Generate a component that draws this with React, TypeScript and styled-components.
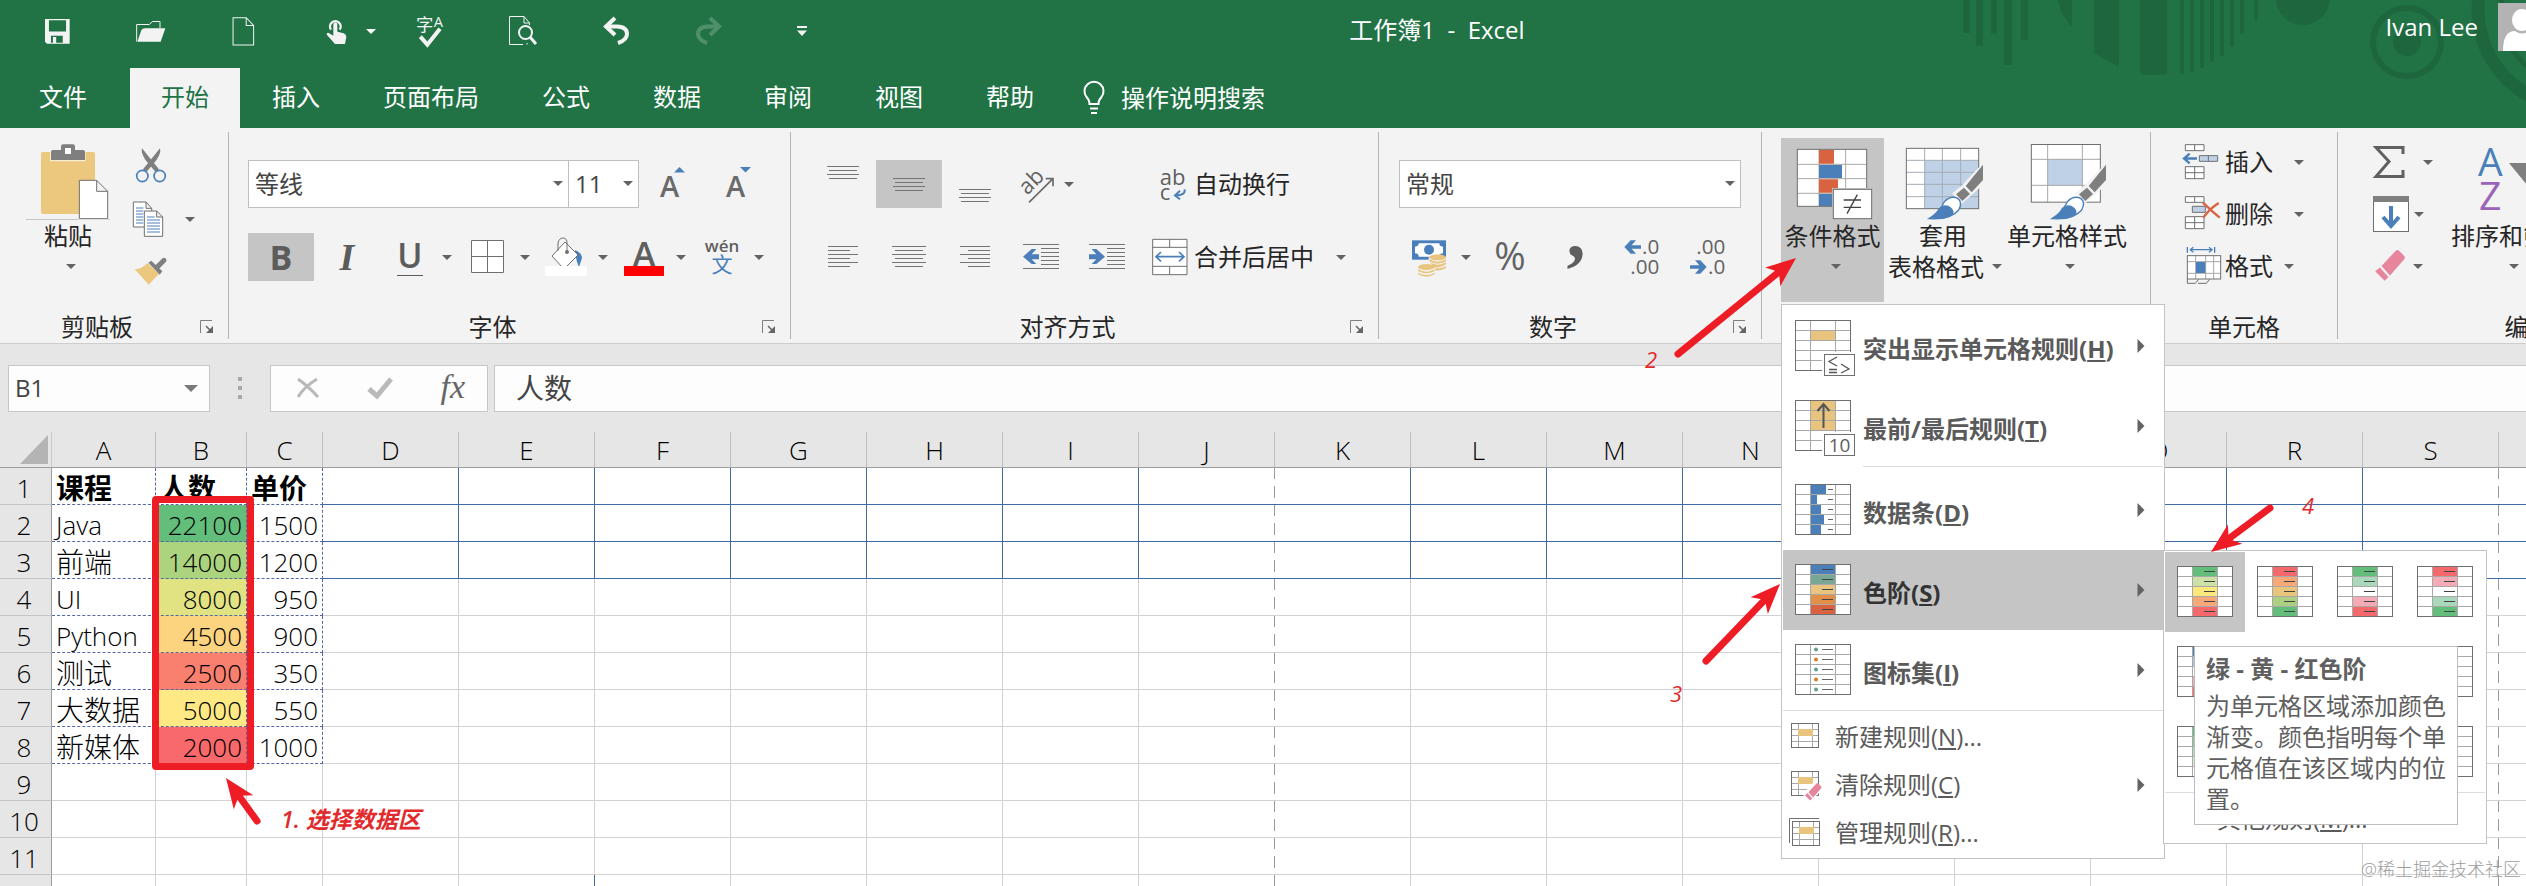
import React from "react";
import styled, { createGlobalStyle, css } from "styled-components";

const BLUE = "#4a7fb9";
const GREY = "#7f7f7f";
const LINE = "#6f6f6f";
const ORANGE = "#d96240";
const SAND = "#e9c47f";
const RED = "#ee1c25";

const GlobalStyle = createGlobalStyle`
  * { box-sizing: border-box; }
  body { margin: 0; }
  body, button, input, select, table {
    font-family: "Open Sans", "Noto Sans CJK SC", sans-serif;
    font-size: 24px;
    line-height: 30px;
  }
  button {
    border: 0;
    margin: 0;
    padding: 0;
    background: transparent;
    color: inherit;
    cursor: pointer;
  }
  svg { display: block; flex: none; overflow: visible; }
  svg text { font-family: "Open Sans", "Noto Sans CJK SC", sans-serif; }
`;

const App = styled.div`
  position: relative;
  display: flex;
  flex-direction: column;
  height: 100vh;
  overflow: hidden;
  background: #fff;
  color: #262626;
`;

/* ---------- header ---------- */

const Header = styled.header`
  position: relative;
  flex: none;
  overflow: hidden;
  background: #217346;
  color: #fff;
`;

const HeaderArt = styled.svg`
  position: absolute;
  top: 0;
  right: 0;
`;

const TitleBar = styled.div`
  position: relative;
  display: flex;
  height: 68px;
`;

const QuickAccess = styled.div`
  display: flex;
  flex: none;
  padding: 0 0 6px 11px;
`;

const QuickButton = styled.button<{ $split?: boolean; $dim?: boolean }>`
  display: flex;
  align-items: center;
  justify-content: ${(p) => (p.$split ? "flex-start" : "center")};
  gap: 17px;
  width: 93px;
  padding-left: ${(p) => (p.$split ? "35px" : "0")};
  opacity: ${(p) => (p.$dim ? 0.22 : 1)};
`;

const WindowTitle = styled.div`
  flex: 1;
  padding-top: 15px;
  text-align: center;
  white-space: pre;
`;

const Account = styled.div`
  display: flex;
  flex: none;
  justify-content: flex-end;
  width: 500px;
  padding-top: 3px;
`;

const AccountName = styled.button`
  height: 48px;
  margin-right: 20px;
`;

const Avatar = styled.svg`
  margin-right: -20px;
`;

const Tabs = styled.nav`
  position: relative;
  display: flex;
  gap: 1px;
  height: 60px;
`;

const Tab = styled.button<{ $active?: boolean; $file?: boolean }>`
  padding: ${(p) => (p.$file ? "0 42px 2px 39px" : "0 31px 2px")};
  background: ${(p) => (p.$active ? "#f3f3f3" : "transparent")};
  color: ${(p) => (p.$active ? "#217346" : "#fff")};
`;

const TellMe = styled.button`
  display: flex;
  align-items: center;
  gap: 15px;
  margin-left: 16px;
`;

/* ---------- ribbon ---------- */

const Ribbon = styled.div`
  display: flex;
  flex: none;
  padding: 4px 0;
  border-bottom: 1px solid #cdcdcd;
  background: #f3f3f3;
`;

const Group = styled.section<{ $width: number }>`
  display: flex;
  flex: none;
  flex-direction: column;
  width: ${(p) => p.$width}px;
  height: 207px;
  border-right: 1px solid #b4b4b4;
`;

const GroupBody = styled.div<{ $pad: number }>`
  display: flex;
  flex: 1;
  align-items: flex-start;
  padding-left: ${(p) => p.$pad}px;
`;

const GroupFooter = styled.div`
  display: flex;
  align-items: center;
  height: 24px;
`;

const GroupLabel = styled.div`
  flex: 1;
  line-height: 24px;
  text-align: center;
`;

const Launcher = styled.button`
  width: 34px;
  padding-left: 6px;
`;

const Rows = styled.div`
  display: flex;
  flex-direction: column;
  gap: 25px;
  padding-top: 28px;
`;

const Row = styled.div`
  display: flex;
  height: 48px;
`;

const Stack = styled.div<{ $left: number; $top?: number; $step?: number }>`
  display: grid;
  grid-auto-rows: ${(p) => p.$step ?? 52}px;
  margin: ${(p) => p.$top ?? 4}px 0 0 ${(p) => p.$left}px;
`;

const StackButton = styled.button<{ $gap?: number }>`
  display: flex;
  align-items: center;
  gap: ${(p) => p.$gap ?? 17}px;
`;

const StackLabel = styled.span<{ $after: number }>`
  margin: 0 ${(p) => p.$after}px 0 3px;
`;

const BigButton = styled.button<{ $width: number; $active?: boolean; $left?: number }>`
  display: flex;
  flex: none;
  flex-direction: column;
  align-items: center;
  width: ${(p) => p.$width}px;
  height: 164px;
  margin: 6px 0 0 ${(p) => p.$left ?? 0}px;
  padding-top: 6px;
  line-height: 31px;
  white-space: nowrap;
  background: ${(p) => (p.$active ? "#c5c5c5" : "transparent")};
`;

const BigCaret = styled.span`
  display: flex;
  align-items: center;
  height: 31px;
  padding-left: 6px;
`;

const CaretLine = styled.span`
  display: flex;
  align-items: center;
  gap: 8px;
  padding-left: 4px;
`;

const ToolButton = styled.button<{ $active?: boolean }>`
  display: flex;
  align-items: center;
  justify-content: center;
  width: 66px;
  height: 48px;
  background: ${(p) => (p.$active ? "#c5c5c5" : "transparent")};
  color: #5c5c5c;
`;

const SplitButton = styled.button`
  display: flex;
  align-items: center;
  width: 78px;
  height: 48px;
  color: #5c5c5c;
`;

const SplitIcon = styled.span<{ $width?: number }>`
  display: flex;
  justify-content: center;
  width: ${(p) => p.$width ?? 60}px;
  margin-right: 2px;
`;

const letter = css`
  font-size: 34px;
  line-height: 40px;
`;

const Bold = styled.b`
  ${letter}
`;

const Italic = styled.i`
  font-family: "Liberation Serif", serif;
  font-size: 38px;
  font-weight: 700;
  line-height: 40px;
`;

const Underline = styled.span`
  ${letter}
  height: 37px;
  border-bottom: 1px solid #5c5c5c;
  font-weight: 600;
  line-height: 32px;
`;

const LabelButton = styled.button<{ $left: number }>`
  display: flex;
  align-items: center;
  height: 48px;
  margin-left: ${(p) => p.$left}px;
`;

const ButtonText = styled.span`
  margin: 0 22px 0 6px;
`;

const SelectBox = styled.span<{ $width: number; $joined?: boolean }>`
  position: relative;
  display: block;
  width: ${(p) => p.$width}px;
  height: 48px;
  margin-left: ${(p) => (p.$joined ? "-1px" : "0")};
`;

const Select = styled.select`
  width: 100%;
  height: 100%;
  padding: 0 24px 0 6px;
  border: 1px solid #bfbfbf;
  border-radius: 0;
  appearance: none;
  background: #fff;
  color: #444;
`;

const SelectCaret = styled.span`
  position: absolute;
  top: 21px;
  right: 6px;
  pointer-events: none;
`;

/* ---------- menus ---------- */

const MenuAnchor = styled.div`
  position: relative;
`;

const Menu = styled.div`
  position: absolute;
  z-index: 10;
  top: 172px;
  left: 0;
  width: 384px;
  padding: 1px;
  border: 1px solid #c3c3c3;
  background: #fff;
  color: #5a5a5a;
`;

const LargeItem = styled.button<{ $active?: boolean }>`
  display: flex;
  align-items: center;
  width: 100%;
  height: 80px;
  padding: 0 18px 0 12px;
  background: ${(p) => (p.$active ? "#c5c5c5" : "transparent")};
  color: ${(p) => (p.$active ? "#333" : "inherit")};
  font-weight: 700;
  text-align: left;
`;

const SmallItem = styled.button`
  display: flex;
  align-items: center;
  width: 100%;
  height: 48px;
  padding: 0 18px 0 6px;
  text-align: left;
`;

const LargeText = styled.span`
  flex: 1;
  padding: 6px 0 0 8px;
`;

const SmallText = styled.span`
  flex: 1;
  padding: 0 0 0 12px;
`;

const Divider = styled.hr<{ $inset?: number }>`
  height: 1px;
  margin: 0 0 ${(p) => (p.$inset ? 3 : 2)}px ${(p) => p.$inset ?? 0}px;
  border: 0;
  background: #dcdcdc;
`;

const SubMenu = styled.div`
  position: absolute;
  top: 245px;
  left: 381px;
  width: 324px;
  padding: 1px 1px 0;
  border: 1px solid #c3c3c3;
  background: #fff;
`;

const Swatches = styled.div`
  display: grid;
  grid-template-columns: repeat(4, 80px);
`;

const Swatch = styled.button<{ $active?: boolean }>`
  display: flex;
  justify-content: center;
  height: 80px;
  padding-top: 14px;
  background: ${(p) => (p.$active ? "#c5c5c5" : "transparent")};
`;

const MoreRules = styled.button`
  width: 100%;
  height: 48px;
  padding-left: 52px;
  text-align: left;
`;

const Tooltip = styled.div`
  position: absolute;
  top: 95px;
  left: 30px;
  width: 264px;
  padding: 6px 10px 10px 11px;
  border: 1px solid #bdbdbd;
  background: #fff;
  color: #606060;
  line-height: 31px;
`;

const TooltipTitle = styled.strong`
  display: block;
  margin-bottom: 6px;
`;

const TooltipText = styled.p`
  margin: 0;
`;

/* ---------- formula bar ---------- */

const FormulaBar = styled.div`
  display: flex;
  flex: none;
  align-items: center;
  height: 88px;
  padding: 0 0 0 8px;
  background: #e6e6e6;
`;

const Field = styled.div`
  display: flex;
  align-items: center;
  height: 47px;
  border: 1px solid #c6c6c6;
  background: #fdfdfd;
`;

const NameField = styled(Field)`
  width: 202px;
  padding-right: 11px;
`;

const Actions = styled(Field)`
  justify-content: space-between;
  width: 218px;
  margin-right: 6px;
  padding: 0 22px 0 25px;
`;

const FormulaField = styled(Field)`
  flex: 1;
  border-right: 0;
`;

const TextInput = styled.input<{ $size: number; $left: number }>`
  flex: 1;
  min-width: 0;
  height: 100%;
  padding: 0 0 2px ${(p) => p.$left}px;
  border: 0;
  background: transparent;
  color: #444;
  font-size: ${(p) => p.$size}px;
`;

const Dots = styled.span`
  display: flex;
  flex-direction: column;
  gap: 5px;
  width: 60px;
  align-items: center;
`;

const Dot = styled.i`
  width: 4px;
  height: 4px;
  background: #a9a9a9;
`;

const Fx = styled.i`
  font-family: "Liberation Serif", serif;
  font-size: 34px;
  color: #666;
`;

/* ---------- sheet ---------- */

const SheetArea = styled.main`
  flex: 1;
  min-height: 0;
  overflow: hidden;
`;

const Sheet = styled.table`
  width: 0;
  border-spacing: 0;
  table-layout: fixed;
  color: #000;
  font-size: 26px;
  font-weight: 300;
`;

const ColHead = styled.th`
  height: 36px;
  padding: 0;
  border-right: 1px solid #bdbdbd;
  border-bottom: 1px solid #9c9c9c;
  background: #e6e6e6;
  font-weight: 300;
`;

const Corner = styled(ColHead)`
  padding: 3px 3px 3px 20px;
  border-right-color: #c9c9c9;
`;

const RowHead = styled.th`
  height: 37px;
  padding: 3px 3px 0 0;
  border-right: 1px solid #9c9c9c;
  border-bottom: 1px solid #c4c4c4;
  background: #e6e6e6;
  font-weight: 300;
`;

type Edge = "grid" | "blue" | "dash" | "break";

const edges: Record<Edge, string> = {
  grid: "1px solid #d2d2d2",
  blue: "1px solid #3f6ba3",
  dash: "1px dashed #5468a4",
  break: "0",
};

const Cell = styled.td<{ $right: Edge; $bottom: Edge; $fill?: string; $num?: boolean; $cjk?: boolean; $head?: boolean }>`
  height: 37px;
  padding: 3px 4px 0;
  overflow: hidden;
  border-right: ${(p) => edges[p.$right]};
  border-bottom: ${(p) => edges[p.$bottom]};
  background: ${(p) => p.$fill ?? "transparent"};
  font-size: ${(p) => (p.$cjk ? "28px" : "26px")};
  font-weight: ${(p) => (p.$head ? 700 : 300)};
  text-align: ${(p) => (p.$num ? "right" : "left")};
  white-space: nowrap;
  ${(p) =>
    p.$right === "break" &&
    css`
      background: linear-gradient(#999 0 11px, transparent 11px 18px, #999 18px 30px, transparent 30px) right top / 1px 100% no-repeat;
    `}
`;

/* ---------- annotations ---------- */

const Notes = styled.div`
  position: absolute;
  z-index: 20;
  inset: 0;
  pointer-events: none;
`;

const NoteBox = styled.div`
  position: absolute;
  top: 496px;
  left: 152px;
  width: 102px;
  height: 274px;
  border: 7px solid ${RED};
  border-radius: 4px;
`;

const NoteText = styled.span<{ $x: number; $y: number; $strong?: boolean }>`
  position: absolute;
  top: ${(p) => p.$y}px;
  left: ${(p) => p.$x}px;
  color: #e22a2c;
  font-size: ${(p) => (p.$strong ? "23px" : "22px")};
  font-style: italic;
  font-weight: ${(p) => (p.$strong ? 600 : 400)};
  white-space: nowrap;
`;

const Watermark = styled.span`
  position: absolute;
  right: 5px;
  bottom: 2px;
  color: #9c9c9c;
  font-size: 18px;
  font-weight: 300;
`;

/* ---------- icons ---------- */

type IconProps = { box: string; w: number; h: number; children: React.ReactNode };
const Icon = ({ box, w, h, children }: IconProps) => (
  <svg viewBox={box} width={w} height={h} fill="none" aria-hidden="true">
    {children}
  </svg>
);

const Caret = ({ color = "#636363", w = 10 }: { color?: string; w?: number }) => (
  <Icon box="0 0 10 5" w={w} h={w / 2}>
    <path d="M0 0H10L5 5Z" fill={color} />
  </Icon>
);

const SaveIcon = () => (
  <Icon box="135 54 76 76" w={25} h={25}>
    <path d="M135 54H210V129H141L135 123ZM147 58V92H199V58ZM153 105V126H159V109H169V126H189V105Z" fill="#f3f3f3" fillRule="evenodd" />
  </Icon>
);
const FolderIcon = () => (
  <Icon box="410 58 90 68" w={30} h={23}>
    <path d="M412 122V71H450L459 62H482V82" stroke="#f3f3f3" strokeWidth="3" />
    <path d="M414 123L426 88Q429 82 436 82H498L484 123Z" fill="#f3f3f3" />
  </Icon>
);
const NewIcon = () => (
  <Icon box="700 50 68 86" w={23} h={29}>
    <path d="M703 52H742L764 75V133H703ZM742 52V75H764" stroke="#f3f3f3" strokeWidth="3" />
  </Icon>
);
const TouchIcon = () => (
  <Icon box="972 54 72 84" w={24} h={28}>
    <path d="M990 92A16 16 0 1 1 1016 92" stroke="#f3f3f3" strokeWidth="7" />
    <path d="M997 78Q997 70 1003 70T1009 78V98L1028 103Q1036 106 1036 114L1032 135H1002L978 108Q975 102 982 101L997 110Z" fill="#f3f3f3" />
  </Icon>
);
const SpellIcon = () => (
  <Icon box="1238 40 90 102" w={30} h={34}>
    <text x="1241" y="91" fontSize="52" fill="#f3f3f3">字</text>
    <text x="1294" y="79" fontSize="44" fill="#f3f3f3">A</text>
    <path d="M1254 108L1275 132L1313 84" stroke="#f3f3f3" strokeWidth="12" />
  </Icon>
);
const PreviewIcon = () => (
  <Icon box="0 0 28 30" w={28} h={30}>
    <path d="M14 28.500H0.500V0.500H15L20.500 7V9M15 0.500V7H20.500M18 27V28.500" stroke="#f3f3f3" />
    <circle cx="16.500" cy="16.500" r="6.500" stroke="#f3f3f3" strokeWidth="2" />
    <path d="M21 21L27 28" stroke="#f3f3f3" strokeWidth="3" />
  </Icon>
);
const UndoIcon = ({ flip }: { flip?: boolean }) => (
  <Icon box="0 0 28 28" w={28} h={28}>
    <g transform={flip ? "matrix(-1 0 0 1 28 0)" : undefined} stroke="#f3f3f3" strokeWidth="4">
      <path d="M13 1L4 9.500L13 18" />
      <path d="M4 9.500H15Q25 10 25 17Q25 23 16 26" />
    </g>
  </Icon>
);
const CustomizeIcon = () => (
  <Icon box="0 0 10 10" w={10} h={10}>
    <path d="M0 1H10" stroke="#f3f3f3" strokeWidth="2" />
    <path d="M0 4.500H10L5 10Z" fill="#f3f3f3" />
  </Icon>
);
const BulbIcon = () => (
  <Icon box="0 0 24 34" w={24} h={34}>
    <path d="M7.500 23Q7.500 19 4.500 16A9.500 9.500 0 1 1 19.500 16Q16.500 19 16.500 23ZM8 27.500H16M9 32H15" stroke="#fff" strokeWidth="2" />
  </Icon>
);

const PasteIcon = () => (
  <Icon box="78 42 252 228" w={84} h={76}>
    <rect x="123" y="66" width="162" height="186" rx="6" fill="#ecc87f" />
    <path d="M150 94V66Q150 60 156 60H183V50Q184 43 191 43H217Q224 43 225 50V60H250Q257 60 257 66V94Z" fill="#f7ecd4" />
    <path d="M153 90V66Q153 60 159 60H183V49Q183 43 190 43H218Q225 43 225 49V60H249Q255 60 255 66V90Z" fill={GREY} />
    <rect x="195" y="54" width="18" height="18" fill="#fff" />
    <path d="M238 151H290L323 184V266H238ZM290 151V184H323" fill="#fff" stroke={LINE} strokeWidth="3" />
    <path d="M78 268.500H236M325 268.500H330" stroke="#c6c6c6" strokeWidth="3" />
  </Icon>
);
const CutIcon = () => (
  <Icon box="396 50 108 108" w={36} h={36}>
    <path d="M426 54Q422 68 436 88L466 124L477 117Z" fill={GREY} />
    <path d="M480 54Q484 68 470 88L440 124L429 117Z" fill={GREY} />
    <circle cx="427" cy="137" r="17" stroke={BLUE} strokeWidth="5" />
    <circle cx="479" cy="137" r="17" stroke={BLUE} strokeWidth="5" />
  </Icon>
);
const CopyIcon = () => (
  <Icon box="396 214 108 108" w={36} h={36}>
    <path d="M400 217H438L455 236V292H400ZM438 217V236H455" fill="#fff" stroke={LINE} strokeWidth="3" />
    <path d="M408 235H430M408 244H430M408 253H430M408 262H430M408 271H430M408 280H430" stroke={BLUE} strokeWidth="3" />
    <path d="M433 244H470L488 262V320H433ZM470 244V262H488" fill="#fff" stroke={LINE} strokeWidth="3" />
    <path d="M441 262H464M441 271H480M441 280H480M441 289H480M441 298H480M441 307H480" stroke={BLUE} strokeWidth="3" />
  </Icon>
);
const PainterIcon = () => (
  <Icon box="396 388 108 108" w={36} h={36}>
    <path d="M404 430Q424 432 442 412L477 445Q460 462 446 477Z" fill="#ecc87f" />
    <path d="M445 411L454 405L487 437L479 447Z" fill={GREY} />
    <path d="M472 424L492 404" stroke={GREY} strokeWidth="15" strokeLinecap="round" />
  </Icon>
);
const FontSizeIcon = ({ down }: { down?: boolean }) => (
  <Icon box="0 0 28 36" w={28} h={36}>
    <text x="2" y="31" fontSize="29" fontWeight="600" fill="#6a6a6a">A</text>
    <path d={down ? "M16 1H27L21.500 6.500Z" : "M16 6.500H27L21.500 1Z"} fill={BLUE} />
  </Icon>
);
const BorderIcon = () => (
  <Icon box="0 0 34 34" w={34} h={34}>
    <path d="M0.500 0.500H32.500V32.500H0.500ZM16.500 0V33M0 16.500H33" fill="#fff" stroke={LINE} />
  </Icon>
);
const FillIcon = () => (
  <Icon box="0 0 42 40" w={42} h={40}>
    <path d="M30 13Q37 16 37 21L34 30Q31 24 30 13Z" fill={BLUE} />
    <path d="M20 5L33 18L20 31H18L7 19Z" fill="#fff" stroke={LINE} />
    <path d="M13 14V6Q14 1 18 1T22 6V14" stroke={LINE} />
    <circle cx="22" cy="15" r="2" fill={LINE} />
    <rect y="29" width="42" height="10" rx="2" fill="#fff" />
  </Icon>
);
const FontColorIcon = () => (
  <Icon box="0 0 40 40" w={40} h={40}>
    <text x="20" y="30" fontSize="35" fontWeight="600" textAnchor="middle" fill="#5f5f5f">A</text>
    <rect y="29" width="40" height="10" fill="#fe0000" />
  </Icon>
);
const PinyinIcon = () => (
  <Icon box="0 0 36 42" w={36} h={42}>
    <text x="18" y="16" fontSize="17" fontWeight="600" textAnchor="middle" fill="#5f5f5f">wén</text>
    <text x="18" y="36" fontSize="21" textAnchor="middle" fill={BLUE}>文</text>
  </Icon>
);

type Lines = { y: number; rows: [number, number][] };
const LinesIcon = ({ y, rows }: Lines) => (
  <Icon box="0 0 36 48" w={36} h={48}>
    <path d={rows.map(([a, b], i) => `M${a} ${y + i * 4 + 0.5}H${b}`).join("")} stroke="#757575" />
  </Icon>
);
const vert: [number, number][] = [[2, 34], [4, 32], [2, 34], [4, 32]];
const left: [number, number][] = [[3, 33], [3, 25], [3, 33], [3, 25], [3, 33], [3, 25]];
const center: [number, number][] = [[1, 35], [4, 32], [1, 35], [4, 32], [1, 35], [4, 32]];
const right: [number, number][] = [[3, 33], [11, 33], [3, 33], [11, 33], [3, 33], [11, 33]];

const OrientationIcon = () => (
  <Icon box="723 100 117 117" w={39} h={39}>
    <text transform="translate(757 192) rotate(-45)" fontSize="66" fill="#5f5f5f">ab</text>
    <path d="M762 212L834 141M812 141H834V164" stroke="#6a6a6a" strokeWidth="5" />
  </Icon>
);
const WrapIcon = () => (
  <Icon box="1116 90 108 144" w={36} h={48}>
    <text x="1139" y="165" fontSize="66" fontWeight="500" fill="#5f5f5f">ab</text>
    <text x="1139" y="209" fontSize="66" fontWeight="500" fill="#5f5f5f">c</text>
    <path d="M1214 178Q1216 196 1188 196M1200 182L1185 196L1200 208" stroke={BLUE} strokeWidth="6" />
  </Icon>
);
const IndentIcon = ({ more }: { more?: boolean }) => (
  <Icon box="729 309 108 144" w={36} h={48}>
    <path d="M729 343.500H837M783 355.500H837M783 367.500H837M783 379.500H837M783 391.500H837M783 403.500H837M729 415.500H837" stroke="#757575" strokeWidth="3" />
    <path
      d={more ? "M777 380L751 357H737L751 373H729V388H751L737 402H751Z" : "M729 380L755 357H769L755 373H777V388H755L769 402H755Z"}
      fill={BLUE}
    />
  </Icon>
);
const MergeIcon = () => (
  <Icon box="1115 309 108 144" w={36} h={48}>
    <path d="M1117 328H1220V434H1117ZM1117 352H1220M1117 409H1220M1168 328V352M1168 409V434" fill="#fff" stroke={LINE} strokeWidth="3" />
    <path d="M1127 380H1210M1142 366L1127 380L1142 394M1196 366L1211 380L1196 394" stroke={BLUE} strokeWidth="5" />
  </Icon>
);
const CurrencyIcon = () => (
  <Icon box="93 309 108 144" w={36} h={48}>
    <rect x="96" y="331" width="102" height="58" fill={BLUE} />
    <path d="M116 340H178Q178 350 189 350V370Q178 370 178 380H116Q116 370 105 370V350Q116 350 116 340Z" fill="#fff" />
    <circle cx="147" cy="359" r="15" fill={BLUE} />
    <path d="M146 381H200V418H168V440H112V410H146Z" fill="#f3f3f3" />
    <g fill={SAND}>
      <ellipse cx="173" cy="382" rx="25" ry="9" />
      <path d="M148 388Q173 402 198 388V394Q173 408 148 394ZM150 397Q173 411 198 397V403Q173 417 160 411ZM166 414Q184 417 198 408V414Q184 423 166 421Z" />
      <ellipse cx="139" cy="411" rx="25" ry="9" />
      <path d="M114 418Q139 432 164 418V423Q139 437 114 423ZM114 428Q139 442 164 428V433Q139 447 114 433Z" />
    </g>
  </Icon>
);
const PercentIcon = () => (
  <Icon box="0 0 36 48" w={36} h={48}>
    <text x="18" y="37" fontSize="38" textAnchor="middle" fill="#636363">%</text>
  </Icon>
);
const CommaIcon = () => (
  <Icon box="0 0 36 48" w={36} h={48}>
    <text x="18" y="24" fontSize="76" fontWeight="700" textAnchor="middle" fill="#5f5f5f" style={{ fontFamily: "Liberation Serif, serif" }}>,</text>
  </Icon>
);
const AddDecimalIcon = () => (
  <Icon box="732 309 108 144" w={36} h={48}>
    <g fontSize="62" textAnchor="end" fill="#636363">
      <text x="838" y="372">.0</text>
      <text x="838" y="432">.00</text>
    </g>
    <path d="M733 351L752 331H768L755 346H783V356H755L768 371H752Z" fill={BLUE} />
  </Icon>
);
const CutDecimalIcon = () => (
  <Icon box="930 309 108 144" w={36} h={48}>
    <g fontSize="62" textAnchor="end" fill="#636363">
      <text x="1036" y="372">.00</text>
      <text x="1036" y="432">.0</text>
    </g>
    <path d="M980 411L961 391H945L958 406H930V416H958L945 431H961Z" fill={BLUE} />
  </Icon>
);
const ConditionalIcon = () => (
  <Icon box="63 42 252 228" w={84} h={76}>
    <rect x="82" y="58" width="208" height="171" fill="#fff" />
    <path d="M147 58V229M227 58V229M82 103H290M82 146H290M82 190H290" stroke="#a8a8a8" strokeWidth="3" />
    <path d="M147 60H192V101H147ZM147 148H204V188H147Z" fill={ORANGE} />
    <path d="M147 105H216V144H147ZM147 192H190V229H147Z" fill={BLUE} />
    <rect x="82" y="58" width="208" height="171" stroke={LINE} strokeWidth="3" />
    <rect x="186" y="174" width="123" height="96" fill="#c5c5c5" />
    <rect x="190" y="178" width="115" height="88" fill="#fff" stroke={LINE} strokeWidth="3" />
    <path d="M221 210H273M221 232H273M262 194L231 251" stroke="#444" strokeWidth="4" />
  </Icon>
);
const BrushArt = () => (
  <g>
    <path d="M648 92V160L575 224L550 190L580 165Z" fill="#f3f3f3" />
    <path d="M642 104V150L608 187L590 168Z" fill={GREY} />
    <path d="M585 173L603 192L580 213L561 193Z" fill={GREY} />
    <path d="M480 266Q545 270 569 240Q582 216 566 205Q545 195 526 215Q512 248 480 266Z" fill="#fff" stroke={BLUE} strokeWidth="4" />
    <path d="M478 266Q502 250 510 234Q520 222 538 227Q556 236 553 252Q540 266 514 267Z" fill={BLUE} />
  </g>
);
const TableFormatIcon = () => (
  <Icon box="396 42 252 228" w={84} h={76}>
    <rect x="412" y="55" width="217" height="181" fill="#fff" />
    <rect x="467" y="91" width="162" height="145" fill="#bfd1e6" />
    <path d="M467 55V236M520 55V236M575 55V236M412 91H629M412 127H629M412 163H629M412 200H629" stroke="#a5adb5" strokeWidth="3" />
    <rect x="412" y="55" width="217" height="181" stroke={LINE} strokeWidth="3" />
    <BrushArt />
  </Icon>
);
const CellStyleIcon = () => (
  <Icon box="768 42 252 228" w={84} h={76}>
    <rect x="787" y="43.500" width="207" height="173" fill="#fff" />
    <rect x="836" y="88" width="104" height="78" fill="#bfd1e6" />
    <path d="M836 43V217M940 43V217M787 88H994M787 166H994" stroke="#a8a8a8" strokeWidth="3" />
    <rect x="787" y="43.500" width="207" height="173" stroke={LINE} strokeWidth="3" />
    <g transform="translate(369 0)">
      <BrushArt />
    </g>
  </Icon>
);
const InsertIcon = () => (
  <Icon box="1236 39 120 120" w={40} h={40}>
    <path d="M1246 47H1302V65H1246ZM1274 47V65M1246 113H1302V149H1246ZM1274 113V149M1246 131H1302" fill="#fff" stroke={LINE} strokeWidth="3" />
    <path d="M1288 80H1343V97H1288ZM1315 80V97" fill="#bfd1e6" stroke={LINE} strokeWidth="3" />
    <path d="M1281 88.500H1242M1259 74L1242 88.500L1259 103" stroke={BLUE} strokeWidth="7" />
  </Icon>
);
const DeleteIcon = () => (
  <Icon box="1236 195 120 120" w={40} h={40}>
    <path d="M1246 203H1302V220H1246ZM1274 203V220M1246 263H1302V299H1246ZM1274 263V299M1246 281H1302" fill="#fff" stroke={LINE} strokeWidth="3" />
    <path d="M1267 232H1306V250H1267Z" fill="#bfd1e6" stroke={LINE} strokeWidth="3" />
    <path d="M1299 221Q1324 246 1349 266M1346 222Q1318 240 1300 266" stroke={ORANGE} strokeWidth="7" />
  </Icon>
);
const FormatIcon = () => (
  <Icon box="1236 351 120 120" w={40} h={40}>
    <path d="M1252 354V371M1334 354V371M1260 362H1327M1270 355L1261 362L1270 370M1317 355L1326 362L1317 370" stroke={BLUE} strokeWidth="4" />
    <rect x="1252" y="380" width="100" height="70" fill="#fff" />
    <path d="M1277 380V450M1307 380V450M1331 380V450M1252 398H1352M1252 433H1352" stroke="#a8a8a8" strokeWidth="3" />
    <rect x="1278" y="399" width="28" height="33" fill={BLUE} />
    <rect x="1252" y="380" width="100" height="70" stroke={LINE} strokeWidth="3" />
    <path d="M1252 450V463H1276L1286 451M1284 463H1309L1319 451" stroke={LINE} strokeWidth="3" />
  </Icon>
);
const SumIcon = () => (
  <Icon box="0 0 36 40" w={36} h={40}>
    <path d="M31 12V5.500H4L17 19.500L4 34.500H31V28" stroke="#606060" strokeWidth="3" />
  </Icon>
);
const FillDownIcon = () => (
  <Icon box="0 0 38 38" w={38} h={38}>
    <rect x="1.500" y="1.500" width="35" height="35" fill="#fff" stroke={LINE} />
    <rect x="1" y="1" width="36" height="6" fill={GREY} />
    <path d="M19 11V30M11 22L19 31L27 22" stroke={BLUE} strokeWidth="4" />
  </Icon>
);
const EraserArt = () => (
  <g>
    <path d="M22 3Q24 1 26 3L30 7Q32 9 30 11L17 26L9 17Z" fill="#e6859c" />
    <path d="M7.500 18.500L15.500 27.500L12 31L3 22Z" fill="#e6859c" />
  </g>
);
const SortIcon = () => (
  <Icon box="0 0 84 76" w={84} h={76}>
    <text x="9" y="32" fontSize="39" fontWeight="500" fill={BLUE}>A</text>
    <text x="10" y="66" fontSize="39" fontWeight="500" fill="#9a63b9">Z</text>
    <path d="M40 19H84L66 41V66L58 60V41Z" fill={GREY} />
  </Icon>
);
const LauncherIcon = () => (
  <Icon box="0 0 15 15" w={15} h={15}>
    <path d="M0.500 13V0.500H12" stroke={GREY} />
    <path d="M6 6L12 12" stroke="#666" strokeWidth="1.500" />
    <path d="M13 6V13H6Z" fill="#666" />
  </Icon>
);

const GridLines = () => (
  <g>
    <path d="M15.500 0V51M40.500 0V51M0 10.500H56M0 20.500H56M0 30.500H56M0 40.500H56" stroke="#a8a8a8" />
    <rect x="0.500" y="0.500" width="55" height="50" stroke={LINE} />
  </g>
);
const ScaleArt = ({ colors }: { colors: string[] }) => (
  <g>
    <rect width="56" height="51" fill="#fff" />
    {colors.map((c, i) => (
      <rect key={i} x="15" y={i * 10 + 1} width="26" height="10" fill={c} />
    ))}
    <GridLines />
    <path d="M27 5.500H38M27 15.500H38M27 25.500H38M27 35.500H38M27 45.500H38" stroke="#444" />
  </g>
);
const ScaleIcon = ({ colors }: { colors: string[] }) => (
  <Icon box="0 0 56 51" w={56} h={51}>
    <ScaleArt colors={colors} />
  </Icon>
);
const MenuIcon = ({ kind }: { kind: string }) => (
  <Icon box="0 0 60 60" w={60} h={60}>
    <rect width="56" height="51" y="4" fill="#fff" />
    <g transform="translate(0 4)">
      {kind === "highlight" && <rect x="16" y="11" width="25" height="9" fill={SAND} />}
      {kind === "top" && <rect x="16" y="1" width="25" height="29" fill={SAND} />}
      {kind === "bars" && <path d="M16 1H31V10H16ZM16 11H22V20H16ZM16 21H26V30H16ZM16 31H29V40H16ZM16 41H26V50H16Z" fill={BLUE} />}
      {kind === "scale" ? <ScaleArt colors={["#4a7fb9", "#79a795", "#e9c47f", "#e48f47", "#d96240"]} /> : <GridLines />}
      {kind === "top" && <path d="M28.500 28V5M22.500 11L28.500 4L34.500 11" stroke="#555" strokeWidth="2" />}
      {kind === "bars" && <path d="M33 5.500H38M33 15.500H38M33 25.500H38M33 35.500H38M33 45.500H38" stroke="#666" />}
      {kind === "icons" && (
        <g>
          {[0, 1, 2, 3, 4].map((i) => (
            <circle key={i} cx="21" cy={5.5 + i * 10} r="2" fill={i % 2 ? "#dd7a26" : "#5fa28c"} />
          ))}
          <path d="M27 5.500H38M27 15.500H38M27 25.500H38M27 35.500H38M27 45.500H38" stroke="#666" />
        </g>
      )}
    </g>
    {(kind === "highlight" || kind === "top") && <rect x="27" y="36" width="33" height="24" fill="#fff" />}
    {kind === "highlight" && (
      <g>
        <rect x="29.500" y="38.500" width="30" height="21" fill="#fff" stroke={LINE} />
        <path d="M42 41L34 45.500L42 50M34 53.500H42M34 56.500H42M46 48L54 53L46 57" stroke="#555" strokeWidth="1.300" />
      </g>
    )}
    {kind === "top" && (
      <g>
        <rect x="29.500" y="38.500" width="30" height="21" fill="#fff" stroke={LINE} />
        <text x="44.500" y="56" fontSize="19" fontWeight="400" textAnchor="middle" fill="#606060">10</text>
      </g>
    )}
  </Icon>
);
const SmallMenuIcon = ({ kind }: { kind: string }) => (
  <Icon box="0 0 34 32" w={34} h={32}>
    {kind === "manage" && <path d="M0.500 26V1.500H30" stroke={LINE} />}
    <g transform={kind === "manage" ? "translate(3 4)" : "translate(2 2)"}>
      <rect x="0.500" y="0.500" width="27" height="24" fill="#fff" />
      <path d="M7.500 0V25M21.500 0V25M0 6.500H28M0 12.500H28M0 18.500H28" stroke="#a8a8a8" />
      <rect x="7" y="6" width="15" height="7" fill={SAND} />
      <rect x="0.500" y="0.500" width="27" height="24" stroke={LINE} />
    </g>
    {kind === "clear" && (
      <g transform="translate(14 13) scale(0.6)">
        <path d="M20 -2L34 11L13 32L-1 21Z" fill="#fff" />
        <EraserArt />
      </g>
    )}
  </Icon>
);
const SubArrow = () => (
  <Icon box="0 0 8 16" w={8} h={16}>
    <path d="M0.500 1L7.500 8L0.500 15Z" fill="#636363" />
  </Icon>
);
const CancelIcon = () => (
  <Icon box="0 0 24 22" w={24} h={22}>
    <path d="M2 2Q12 9 22 20M21 2Q8 10 2 20" stroke="#b9b9b9" strokeWidth="3" />
  </Icon>
);
const EnterIcon = () => (
  <Icon box="0 0 26 22" w={26} h={22}>
    <path d="M2 12L10 19L24 2" stroke="#b9b9b9" strokeWidth="5" />
  </Icon>
);

/* ---------- composed controls ---------- */

const Dropdown = ({ label, value, width, joined }: { label: string; value: string; width: number; joined?: boolean }) => (
  <SelectBox $width={width} $joined={joined}>
    <Select aria-label={label} defaultValue={value}>
      <option>{value}</option>
    </Select>
    <SelectCaret>
      <Caret />
    </SelectCaret>
  </SelectBox>
);

const Split = ({ label, width, children }: { label: string; width?: number; children: React.ReactNode }) => (
  <SplitButton aria-label={label}>
    <SplitIcon $width={width}>{children}</SplitIcon>
    <Caret />
  </SplitButton>
);

const Footer = ({ label, launcher }: { label: string; launcher?: boolean }) => (
  <GroupFooter>
    <GroupLabel>{label}</GroupLabel>
    {launcher && (
      <Launcher aria-label={`${label}设置`}>
        <LauncherIcon />
      </Launcher>
    )}
  </GroupFooter>
);

const G = "#63be7b";
const R = "#f4696b";
const scales = [
  [G, "#cde0a6", "#fbe97b", "#f6a878", R],
  [R, "#f6a878", "#e9c57c", "#abd082", G],
  [G, "#a9d9ba", "#fff", "#f5abb5", R],
  [R, "#f5abb5", "#fff", "#a9d9ba", G],
  ["#4a7fb9", "#a9c3e0", "#fff", "#f5abb5", R],
  [R, "#f5abb5", "#fff", "#a9c3e0", "#4a7fb9"],
  ["#fff", "#fbd5d6", "#f8b0b2", "#f68b8e", R],
  [R, "#f68b8e", "#f8b0b2", "#fbd5d6", "#fff"],
  [G, "#8acf9c", "#b1dfbd", "#d8efde", "#fff"],
  ["#fff", "#d8efde", "#b1dfbd", "#8acf9c", G],
  [G, "#8ecb7e", "#b9d781", "#dce183", "#fbe97b"],
  ["#fbe97b", "#dce183", "#b9d781", "#8ecb7e", G],
];

const ConditionalMenu = () => (
  <Menu role="menu">
    <LargeItem role="menuitem">
      <MenuIcon kind="highlight" />
      <LargeText>突出显示单元格规则(<u>H</u>)</LargeText>
      <SubArrow />
    </LargeItem>
    <LargeItem role="menuitem">
      <MenuIcon kind="top" />
      <LargeText>最前/最后规则(<u>T</u>)</LargeText>
      <SubArrow />
    </LargeItem>
    <Divider $inset={80} />
    <LargeItem role="menuitem">
      <MenuIcon kind="bars" />
      <LargeText>数据条(<u>D</u>)</LargeText>
      <SubArrow />
    </LargeItem>
    <LargeItem role="menuitem" $active>
      <MenuIcon kind="scale" />
      <LargeText>色阶(<u>S</u>)</LargeText>
      <SubArrow />
    </LargeItem>
    <LargeItem role="menuitem">
      <MenuIcon kind="icons" />
      <LargeText>图标集(<u>I</u>)</LargeText>
      <SubArrow />
    </LargeItem>
    <Divider />
    <SmallItem role="menuitem">
      <SmallMenuIcon kind="new" />
      <SmallText>新建规则(<u>N</u>)...</SmallText>
    </SmallItem>
    <SmallItem role="menuitem">
      <SmallMenuIcon kind="clear" />
      <SmallText>清除规则(<u>C</u>)</SmallText>
      <SubArrow />
    </SmallItem>
    <SmallItem role="menuitem">
      <SmallMenuIcon kind="manage" />
      <SmallText>管理规则(<u>R</u>)...</SmallText>
    </SmallItem>
    <SubMenu role="menu">
      <Swatches>
        {scales.map((colors, i) => (
          <Swatch key={i} $active={i === 0} aria-label={`色阶 ${i + 1}`}>
            <ScaleIcon colors={colors} />
          </Swatch>
        ))}
      </Swatches>
      <Divider />
      <MoreRules role="menuitem">其他规则(<u>M</u>)...</MoreRules>
      <Tooltip role="tooltip">
        <TooltipTitle>绿 - 黄 - 红色阶</TooltipTitle>
        <TooltipText>为单元格区域添加颜色渐变。颜色指明每个单元格值在该区域内的位置。</TooltipText>
      </Tooltip>
    </SubMenu>
  </Menu>
);

/* ---------- sheet data ---------- */

const columns = "ABCDEFGHIJKLMNOPQRST".split("");
const widths = [104, 91, 76];
const data: [string, string, string, string?][] = [
  ["课程", "人数", "单价"],
  ["Java", "22100", "1500", "#63be7b"],
  ["前端", "14000", "1200", "#acd47f"],
  ["UI", "8000", "950", "#e1e383"],
  ["Python", "4500", "900", "#fcd37f"],
  ["测试", "2500", "350", "#f97f6f"],
  ["大数据", "5000", "550", "#ffe984"],
  ["新媒体", "2000", "1000", "#f8696b"],
];

const edgeRight = (row: number, col: string): Edge => {
  if (col === "J" || col === "S") return "break";
  if ("ABC".includes(col)) return row <= 8 ? "dash" : "grid";
  if (row <= 3 || (row === 12 && col === "E")) return "blue";
  return "grid";
};
const edgeBottom = (row: number, col: string): Edge => {
  if ("ABC".includes(col)) return row <= 8 ? "dash" : "grid";
  return row <= 3 ? "blue" : "grid";
};

const SheetGrid = () => (
  <Sheet>
    <colgroup>
      <col style={{ width: 52 }} />
      {columns.map((c, i) => (
        <col key={c} style={{ width: widths[i] ?? 136 }} />
      ))}
    </colgroup>
    <thead>
      <tr>
        <Corner aria-label="全选">
          <Icon box="0 0 28 29" w={28} h={29}>
            <path d="M28 0V29H0Z" fill="#b4b4b4" />
          </Icon>
        </Corner>
        {columns.map((c) => (
          <ColHead key={c} scope="col">{c}</ColHead>
        ))}
      </tr>
    </thead>
    <tbody>
      {Array.from({ length: 12 }, (_, i) => i + 1).map((row) => (
        <tr key={row}>
          <RowHead scope="row">{row}</RowHead>
          {columns.map((c, i) => {
            const text = i < 3 ? (data[row - 1]?.[i] ?? "") : "";
            return (
              <Cell
                key={c}
                $right={edgeRight(row, c)}
                $bottom={edgeBottom(row, c)}
                $fill={i === 1 ? data[row - 1]?.[3] : undefined}
                $num={/^\d/.test(text)}
                $cjk={/[\u4e00-\u9fff]/.test(text)}
                $head={row === 1}
              >
                {text}
              </Cell>
            );
          })}
        </tr>
      ))}
    </tbody>
  </Sheet>
);

const Arrow = ({ from, to }: { from: [number, number]; to: [number, number] }) => {
  const dx = to[0] - from[0];
  const dy = to[1] - from[1];
  const length = Math.hypot(dx, dy);
  const angle = (Math.atan2(dy, dx) * 180) / Math.PI;
  return (
    <g transform={`translate(${from[0]} ${from[1]}) rotate(${angle})`}>
      <path d={`M0 0H${length - 20}`} stroke={RED} strokeWidth="7" strokeLinecap="round" />
      <path d={`M${length} 0L${length - 30} 12L${length - 22} 0L${length - 30} -12Z`} fill={RED} />
    </g>
  );
};

const NoteArrows = styled.svg`
  position: absolute;
  inset: 0;
  width: 100%;
  height: 100%;
`;

const tabs = ["开始", "插入", "页面布局", "公式", "数据", "审阅", "视图", "帮助"];

export default function ExcelWindow() {
  return (
    <App>
      <GlobalStyle />
      <Header>
        <HeaderArt viewBox="1960 0 566 128" width="566" height="128" fill="none" aria-hidden="true">
          <path
            fill="#1d663e"
            d="M1963 0H1970V33H1963ZM1976 0H1983V46H1976ZM1991 0H1997V34H1991ZM2004 0H2012V65H2004ZM2021 0H2028V40H2021ZM2058 0H2072V27Q2060 14 2058 0ZM2094 0H2119V67L2094 53ZM2140 0H2167V72Q2166 75 2162 75H2144Q2140 75 2140 71Z"
          />
          <path d="M2182 0V74M2192 0V72M2202 0V68M2212 0V62M2222 0V56M2232 0V46M2242 0V34M2256 0V20" stroke="#1d663e" strokeWidth="4" />
          <circle cx="2303" cy="-2" r="27" fill="#1d663e" />
          <circle cx="2407" cy="42" r="34" stroke="#1d663e" strokeWidth="6" />
          <circle cx="2407" cy="42" r="14" fill="#1d663e" />
          <circle cx="2575" cy="10" r="97" stroke="#1d663e" strokeWidth="13" />
          <circle cx="2575" cy="10" r="74" stroke="#1d663e" strokeWidth="5" />
        </HeaderArt>
        <TitleBar>
          <QuickAccess>
            <QuickButton aria-label="保存"><SaveIcon /></QuickButton>
            <QuickButton aria-label="打开"><FolderIcon /></QuickButton>
            <QuickButton aria-label="新建"><NewIcon /></QuickButton>
            <QuickButton aria-label="触摸模式" $split>
              <TouchIcon />
              <Caret color="#fff" />
            </QuickButton>
            <QuickButton aria-label="拼写检查"><SpellIcon /></QuickButton>
            <QuickButton aria-label="打印预览"><PreviewIcon /></QuickButton>
            <QuickButton aria-label="撤消"><UndoIcon /></QuickButton>
            <QuickButton aria-label="恢复" $dim><UndoIcon flip /></QuickButton>
            <QuickButton aria-label="自定义快速访问工具栏"><CustomizeIcon /></QuickButton>
          </QuickAccess>
          <WindowTitle>{"工作簿1  -  Excel"}</WindowTitle>
          <Account>
            <AccountName>Ivan Lee</AccountName>
            <Avatar viewBox="0 0 48 48" width="48" height="48" aria-hidden="true">
              <rect width="48" height="48" fill="#b3b3b3" />
              <ellipse cx="24" cy="17" rx="10" ry="11" fill="#fff" />
              <path d="M5 48Q5 28 17 28Q24 33 31 28Q43 28 43 48Z" fill="#fff" />
            </Avatar>
          </Account>
        </TitleBar>
        <Tabs>
          <Tab $file>文件</Tab>
          {tabs.map((t, i) => (
            <Tab key={t} $active={i === 0}>{t}</Tab>
          ))}
          <TellMe>
            <BulbIcon />
            操作说明搜索
          </TellMe>
        </Tabs>
      </Header>

      <Ribbon>
        <Group $width={229}>
          <GroupBody $pad={26}>
            <BigButton $width={84}>
              <PasteIcon />
              粘贴
              <BigCaret><Caret /></BigCaret>
            </BigButton>
            <Stack $left={22} $top={6} $step={54}>
              <StackButton aria-label="剪切"><CutIcon /></StackButton>
              <StackButton aria-label="复制"><CopyIcon /><Caret /></StackButton>
              <StackButton aria-label="格式刷"><PainterIcon /></StackButton>
            </Stack>
          </GroupBody>
          <Footer label="剪贴板" launcher />
        </Group>

        <Group $width={562}>
          <GroupBody $pad={19}>
            <Rows>
              <Row>
                <Dropdown label="字体" value="等线" width={321} />
                <Dropdown label="字号" value="11" width={71} joined />
                <ToolButton aria-label="增大字号"><FontSizeIcon /></ToolButton>
                <ToolButton aria-label="减小字号"><FontSizeIcon down /></ToolButton>
              </Row>
              <Row>
                <ToolButton $active><Bold>B</Bold></ToolButton>
                <ToolButton><Italic>I</Italic></ToolButton>
                <Split label="下划线"><Underline>U</Underline></Split>
                <Split label="边框"><BorderIcon /></Split>
                <Split label="填充颜色"><FillIcon /></Split>
                <Split label="字体颜色"><FontColorIcon /></Split>
                <Split label="拼音"><PinyinIcon /></Split>
              </Row>
            </Rows>
          </GroupBody>
          <Footer label="字体" launcher />
        </Group>

        <Group $width={588}>
          <GroupBody $pad={19}>
            <Rows>
              <Row>
                <ToolButton aria-label="顶端对齐"><LinesIcon y={6} rows={vert} /></ToolButton>
                <ToolButton aria-label="垂直居中" $active><LinesIcon y={18} rows={vert} /></ToolButton>
                <ToolButton aria-label="底端对齐"><LinesIcon y={29} rows={vert} /></ToolButton>
                <Split label="方向" width={54}><OrientationIcon /></Split>
                <LabelButton $left={66}>
                  <WrapIcon />
                  <ButtonText>自动换行</ButtonText>
                </LabelButton>
              </Row>
              <Row>
                <ToolButton aria-label="左对齐"><LinesIcon y={13} rows={left} /></ToolButton>
                <ToolButton aria-label="居中"><LinesIcon y={13} rows={center} /></ToolButton>
                <ToolButton aria-label="右对齐"><LinesIcon y={13} rows={right} /></ToolButton>
                <ToolButton aria-label="减少缩进量"><IndentIcon /></ToolButton>
                <ToolButton aria-label="增加缩进量"><IndentIcon more /></ToolButton>
                <LabelButton $left={12}>
                  <MergeIcon />
                  <ButtonText>合并后居中</ButtonText>
                  <Caret />
                </LabelButton>
              </Row>
            </Rows>
          </GroupBody>
          <Footer label="对齐方式" launcher />
        </Group>

        <Group $width={383}>
          <GroupBody $pad={20}>
            <Rows>
              <Row>
                <Dropdown label="数字格式" value="常规" width={342} />
              </Row>
              <Row>
                <Split label="会计数字格式"><CurrencyIcon /></Split>
                <ToolButton aria-label="百分比样式"><PercentIcon /></ToolButton>
                <ToolButton aria-label="千位分隔样式"><CommaIcon /></ToolButton>
                <ToolButton aria-label="增加小数位数"><AddDecimalIcon /></ToolButton>
                <ToolButton aria-label="减少小数位数"><CutDecimalIcon /></ToolButton>
              </Row>
            </Rows>
          </GroupBody>
          <Footer label="数字" launcher />
        </Group>

        <Group $width={389}>
          <GroupBody $pad={19}>
            <MenuAnchor>
              <BigButton $width={103} $active>
                <ConditionalIcon />
                条件格式
                <BigCaret><Caret /></BigCaret>
              </BigButton>
              <ConditionalMenu />
            </MenuAnchor>
            <BigButton $width={118}>
              <TableFormatIcon />
              套用
              <CaretLine>表格格式<Caret /></CaretLine>
            </BigButton>
            <BigButton $width={130}>
              <CellStyleIcon />
              单元格样式
              <BigCaret><Caret /></BigCaret>
            </BigButton>
          </GroupBody>
        </Group>

        <Group $width={187}>
          <GroupBody $pad={0}>
            <Stack $left={31}>
              <StackButton $gap={0}><InsertIcon /><StackLabel $after={21}>插入</StackLabel><Caret /></StackButton>
              <StackButton $gap={0}><DeleteIcon /><StackLabel $after={21}>删除</StackLabel><Caret /></StackButton>
              <StackButton $gap={0}><FormatIcon /><StackLabel $after={11}>格式</StackLabel><Caret /></StackButton>
            </Stack>
          </GroupBody>
          <Footer label="单元格" />
        </Group>

        <Group $width={382}>
          <GroupBody $pad={0}>
            <Stack $left={34}>
              <StackButton aria-label="自动求和" $gap={15}><SumIcon /><Caret /></StackButton>
              <StackButton aria-label="填充" $gap={4}><FillDownIcon /><Caret /></StackButton>
              <StackButton aria-label="清除" $gap={5}>
                <Icon box="0 0 34 34" w={36} h={36}><EraserArt /></Icon>
                <Caret />
              </StackButton>
            </Stack>
            <BigButton $width={126} $left={15}>
              <SortIcon />
              排序和筛选
              <BigCaret><Caret /></BigCaret>
            </BigButton>
          </GroupBody>
          <Footer label="编辑" />
        </Group>
      </Ribbon>

      <FormulaBar>
        <NameField>
          <TextInput $size={24} $left={6} aria-label="名称框" defaultValue="B1" />
          <Caret color="#7a7a7a" w={14} />
        </NameField>
        <Dots><Dot /><Dot /><Dot /></Dots>
        <Actions>
          <button aria-label="取消"><CancelIcon /></button>
          <button aria-label="输入"><EnterIcon /></button>
          <button aria-label="插入函数"><Fx>fx</Fx></button>
        </Actions>
        <FormulaField>
          <TextInput $size={28} $left={21} aria-label="编辑栏" defaultValue="人数" />
        </FormulaField>
      </FormulaBar>

      <SheetArea>
        <SheetGrid />
      </SheetArea>

      <Notes>
        <NoteBox />
        <NoteArrows aria-hidden="true">
          <Arrow from={[257, 821]} to={[226, 778]} />
          <Arrow from={[1678, 354]} to={[1796, 258]} />
          <Arrow from={[1706, 661]} to={[1780, 584]} />
          <Arrow from={[2270, 508]} to={[2211, 552]} />
        </NoteArrows>
        <NoteText $x={281} $y={804} $strong>1. 选择数据区</NoteText>
        <NoteText $x={1645} $y={344}>2</NoteText>
        <NoteText $x={1670} $y={678}>3</NoteText>
        <NoteText $x={2302} $y={490}>4</NoteText>
        <Watermark>@稀土掘金技术社区</Watermark>
      </Notes>
    </App>
  );
}
